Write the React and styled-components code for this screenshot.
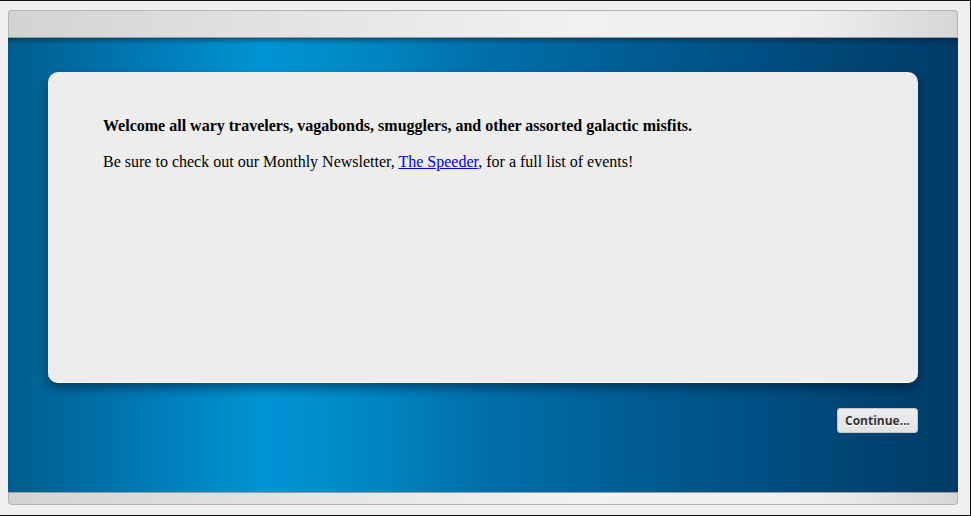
import React from 'react';
import styled, { createGlobalStyle } from 'styled-components';

const GlobalStyle = createGlobalStyle`
  html, body {
    margin: 0;
    padding: 0;
    background: #f0f0f0;
  }
`;

const Frame = styled.div`
  width: 971px;
  height: 516px;
  box-sizing: border-box;
  border: 1px solid #111;
  border-left: none;
  background: #f0f0f0;
  padding: 9px 12px 0 8px;
`;

const Player = styled.div`
  width: 950px;
  display: flex;
  flex-direction: column;
`;

const Bar = styled.div`
  height: ${(p) => p.$h}px;
  box-sizing: border-box;
  background: linear-gradient(to right, #d3d3d3 0%, #e6e6e6 35%, #f1f1f1 60%, #eeeeee 85%, #d6d6d6 100%);
  border: 1px solid #b4b4b4;
  border-radius: ${(p) => (p.$top ? '4px 4px 0 0' : '0 0 4px 4px')};
  ${(p) => (p.$top ? 'border-bottom: 1px solid #9a9a9a;' : 'border-top: 1px solid #9a9a9a;')}
`;

const Stage = styled.div`
  height: 454px;
  box-sizing: border-box;
  padding: 34px 40px 0 40px;
  display: flex;
  flex-direction: column;
  align-items: flex-end;
  background: linear-gradient(to right, #005d8c 0%, #0079b4 14%, #0094d4 27%, #008ac6 36%, #0070aa 50%, #005d93 66%, #004c7e 82%, #003b66 100%);
  box-shadow: inset 0 5px 5px -3px rgba(0, 20, 40, 0.55);
`;

const Card = styled.div`
  align-self: stretch;
  height: 311px;
  box-sizing: border-box;
  background: #ededed;
  border-radius: 10px;
  border-bottom: 1px solid #ffffff;
  padding: 27px 55px 0 55px;
  box-shadow: 0 6px 10px rgba(0, 20, 40, 0.45);
  font-family: "Liberation Serif", "Times New Roman", serif;
  font-size: 16px;
  color: #000;
`;

const Para = styled.p`
  margin: 18px 0;
  font-weight: ${(p) => (p.$bold ? 700 : 400)};
`;

const NewsLink = styled.a`
  color: #0000ee;
  text-decoration: underline;
`;

const ContinueButton = styled.button`
  margin-top: 25px;
  width: 81px;
  height: 25px;
  box-sizing: border-box;
  background: linear-gradient(#ececec, #e2e2e2);
  border: 1px solid #c8c8c8;
  border-radius: 3px;
  font-family: "Open Sans", "Noto Sans", sans-serif;
  font-weight: 700;
  font-size: 12px;
  color: #333;
  text-shadow: 0 1px 0 #fff;
  padding: 0;
  cursor: pointer;
`;

export default function App() {
  return (
    <>
      <GlobalStyle />
      <Frame>
        <Player>
          <Bar $top $h={28} />
          <Stage>
            <Card>
              <Para $bold>
                Welcome all wary travelers, vagabonds, smugglers, and other assorted galactic misfits.
              </Para>
              <Para>
                Be sure to check out our Monthly Newsletter, <NewsLink href="#">The Speeder</NewsLink>, for a full list of events!
              </Para>
            </Card>
            <ContinueButton>Continue...</ContinueButton>
          </Stage>
          <Bar $h={13} />
        </Player>
      </Frame>
    </>
  );
}
